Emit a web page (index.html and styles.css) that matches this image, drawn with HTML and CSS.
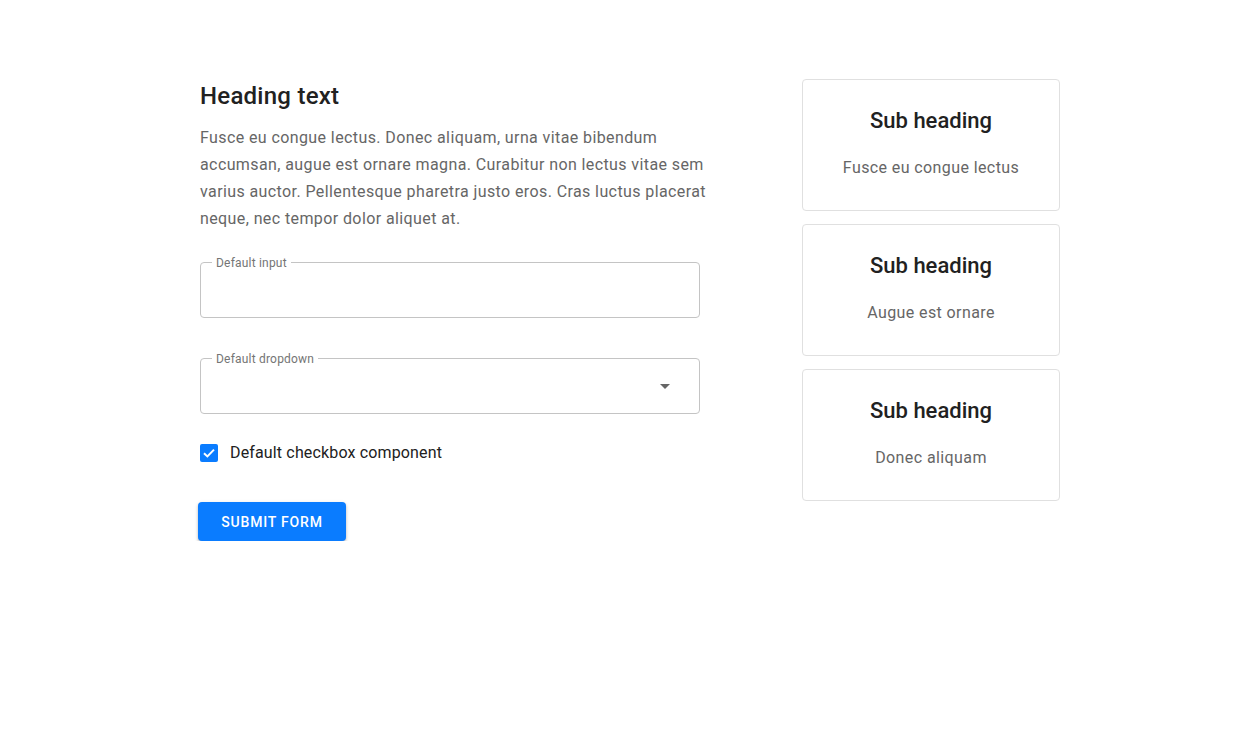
FILE: index.html
```html
<!DOCTYPE html>
<html lang="en">
<head>
<meta charset="utf-8">
<title>Form</title>
<link rel="stylesheet" href="styles.css">
</head>
<body>
<div class="page">
  <main class="main">
    <h1 class="heading">Heading text</h1>
    <p class="lead">Fusce eu congue lectus. Donec aliquam, urna vitae bibendum accumsan, augue est ornare magna. Curabitur non lectus vitae sem varius auctor. Pellentesque pharetra justo eros. Cras luctus placerat neque, nec tempor dolor aliquet at.</p>
    <form class="form">
      <div class="field">
        <span class="field-label">Default input</span>
      </div>
      <div class="field select">
        <span class="field-label">Default dropdown</span>
        <span class="arrow"></span>
      </div>
      <label class="check">
        <span class="box">
          <svg width="18" height="18" viewBox="0 0 18 18"><path d="M4 9.2 L7.4 12.4 L14 5.6" fill="none" stroke="#fff" stroke-width="2"/></svg>
        </span>
        <span class="check-text">Default checkbox component</span>
      </label>
      <div class="actions">
        <button type="button" class="btn">Submit form</button>
      </div>
    </form>
  </main>
  <aside class="side">
    <div class="card">
      <h2 class="card-title">Sub heading</h2>
      <p class="card-text">Fusce eu congue lectus</p>
    </div>
    <div class="card">
      <h2 class="card-title">Sub heading</h2>
      <p class="card-text">Augue est ornare</p>
    </div>
    <div class="card">
      <h2 class="card-title">Sub heading</h2>
      <p class="card-text">Donec aliquam</p>
    </div>
  </aside>
</div>
</body>
</html>
```

FILE: styles.css
```css
* { box-sizing: border-box; }
html, body { margin: 0; padding: 0; background: #fff; }
body {
  font-family: Roboto, "Liberation Sans", Arial, sans-serif;
  color: rgba(0,0,0,0.87);
}
.page {
  display: flex;
  padding: 79px 0 0 200px;
}
.main {
  width: 510px;
  padding-top: 1px;
}
.heading {
  margin: 0;
  font-size: 24px;
  font-weight: 500;
  line-height: 32px;
  letter-spacing: 0.25px;
  color: #212121;
}
.lead {
  margin: 12px 0 0;
  font-size: 16px;
  line-height: 27px;
  letter-spacing: 0.4px;
  color: #666;
}
.form {
  display: flex;
  flex-direction: column;
  margin-top: 30px;
}
.field {
  position: relative;
  width: 500px;
  height: 56px;
  border: 1px solid #c4c4c4;
  border-radius: 4px;
  margin-bottom: 40px;
}
.field-label {
  position: absolute;
  top: -7px;
  left: 11px;
  padding: 0 4px;
  background: #fff;
  font-size: 12px;
  line-height: 14px;
  color: #757575;
  letter-spacing: 0.2px;
}
.select {
  display: flex;
  align-items: center;
  justify-content: flex-end;
  padding-right: 29px;
  margin-bottom: 0;
}
.arrow {
  width: 0;
  height: 0;
  border-left: 5px solid transparent;
  border-right: 5px solid transparent;
  border-top: 5px solid #666;
}
.check {
  display: flex;
  align-items: center;
  gap: 12px;
  margin-top: 30px;
  height: 18px;
}
.box {
  width: 18px;
  height: 18px;
  border-radius: 2px;
  background: #0a7cff;
  display: flex;
}
.check-text {
  font-size: 16px;
  line-height: 20px;
  color: #212121;
  letter-spacing: 0.15px;
}
.actions {
  margin-top: 40px;
  margin-left: -2px;
}
.btn {
  font-family: Roboto, "Liberation Sans", Arial, sans-serif;
  width: 148px;
  height: 39px;
  border: 0;
  border-radius: 4px;
  background: #0a7cff;
  color: #fff;
  font-size: 14px;
  font-weight: 500;
  letter-spacing: 0.8px;
  text-transform: uppercase;
  box-shadow: 0 2px 3px rgba(0,0,0,0.2), 0 1px 4px rgba(0,0,0,0.1);
  padding: 0;
}
.side {
  margin-left: 92px;
  display: flex;
  flex-direction: column;
  gap: 13px;
}
.card {
  width: 258px;
  height: 132px;
  border: 1px solid #e0e0e0;
  border-radius: 4px;
  text-align: center;
  padding-top: 27px;
}
.card-title {
  margin: 0;
  font-size: 22px;
  font-weight: 500;
  line-height: 28px;
  color: #212121;
}
.card-text {
  margin: 23px 0 0;
  font-size: 16px;
  line-height: 20px;
  letter-spacing: 0.4px;
  color: #666;
}
```
